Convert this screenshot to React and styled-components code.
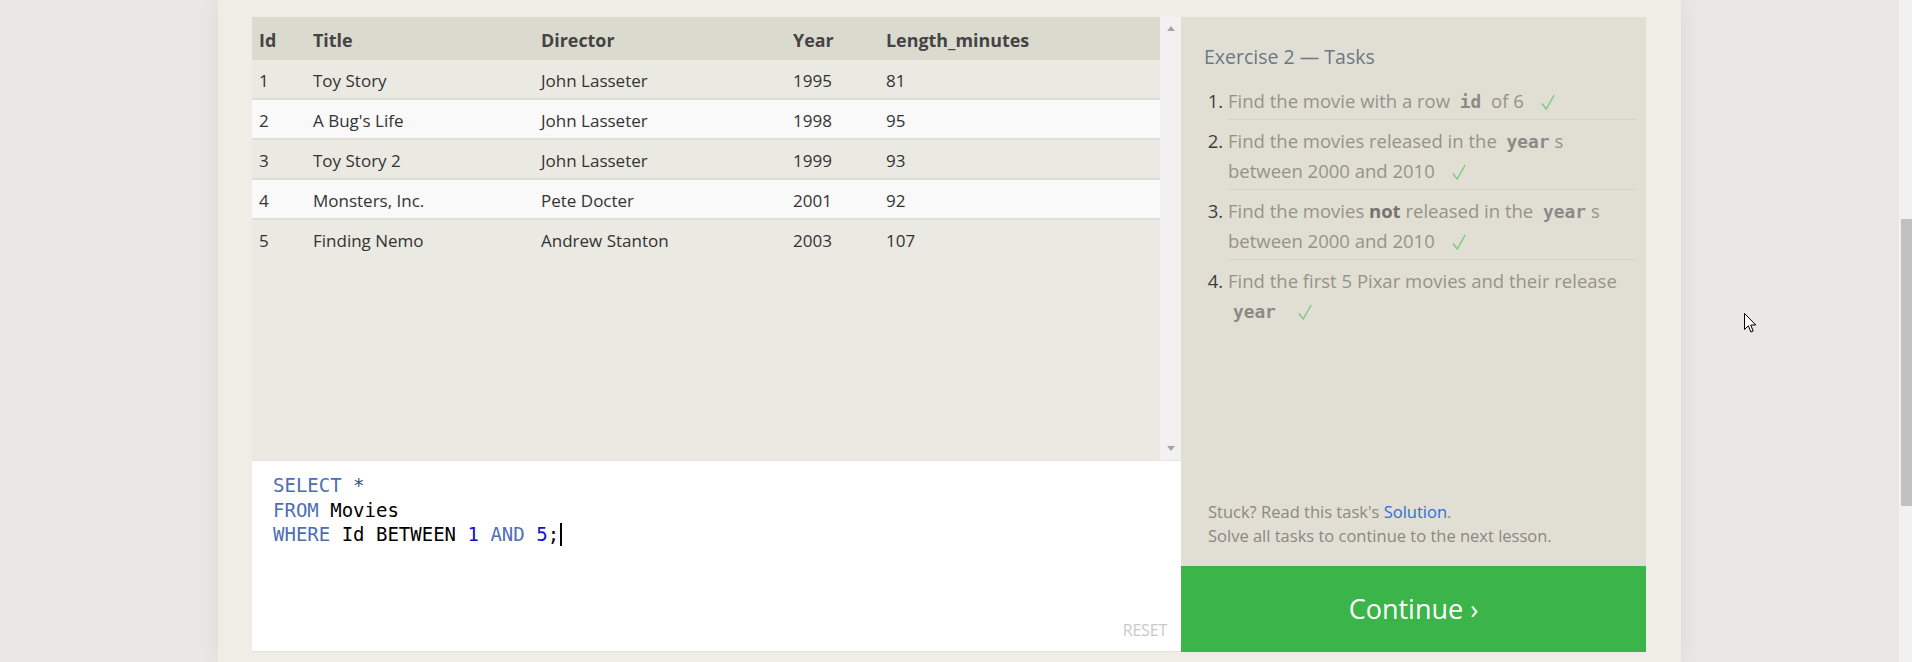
import React from 'react';
import styled, { createGlobalStyle } from 'styled-components';

const GlobalStyle = createGlobalStyle`
  html, body { margin: 0; padding: 0; background: #ebe7e4; overflow: hidden; }
  body { font-family: "Open Sans", "Noto Sans", sans-serif; }
  * { box-sizing: border-box; }
`;

const Page = styled.div`
  position: relative;
  display: flex;
  width: 1912px;
  height: 662px;
  overflow: hidden;
`;

const Sheet = styled.main`
  margin-left: 218px;
  width: 1463px;
  height: 100%;
  background: #f0ede6;
  box-shadow: 0 0 22px rgba(0, 0, 0, 0.07);
  padding: 17px 35px 0 34px;
`;

const Exercise = styled.section`
  display: flex;
  height: 635px;
`;

const LeftCol = styled.div`
  width: 929px;
  display: flex;
  flex-direction: column;
`;

const Results = styled.div`
  height: 443px;
  display: flex;
  background: #eae9e2;
`;

const TableArea = styled.div`
  flex: 1;
  font-size: 17px;
`;

const COLS = '54px 228px 252px 93px 1fr';

const HeaderRow = styled.div`
  display: grid;
  grid-template-columns: ${COLS};
  align-items: center;
  height: 43px;
  padding-top: 2px;
  background: #dbdacf;
  color: #444;
  font-size: 17.9px;
  font-weight: 700;
`;

const Row = styled.div`
  display: grid;
  grid-template-columns: ${COLS};
  align-items: center;
  height: 40px;
  padding-top: 2px;
  border-bottom: 2px solid #deddd8;
  background: ${(p) => (p.$even ? '#f9f9f9' : '#eae9e2')};
  color: #333;
  &:last-child { border-bottom-color: transparent; }
`;

const Cell = styled.div`
  padding-left: 7px;
  white-space: nowrap;
`;

const VScroll = styled.div`
  width: 21px;
  background: #f1f1f1;
  display: flex;
  flex-direction: column;
  justify-content: space-between;
  align-items: center;
  padding: 9px 0 9px;
`;

const Arrow = styled.div`
  width: 0;
  height: 0;
  border-left: 4.5px solid transparent;
  border-right: 4.5px solid transparent;
  ${(p) =>
    p.$down
      ? 'border-top: 5px solid #a3a3a3;'
      : 'border-bottom: 5px solid #a3a3a3;'}
`;

const Editor = styled.div`
  height: 192px;
  background: #fff;
  border-top: 1px solid #e6e4dd;
  border-bottom: 1px solid #e3e1da;
  display: flex;
  flex-direction: column;
  padding: 12px 14px 10px 21px;
`;

const Code = styled.pre`
  margin: 0;
  font-family: "DejaVu Sans Mono", "Liberation Mono", monospace;
  font-size: 19px;
  line-height: 24.5px;
  color: #000;
`;

const Kw = styled.span`
  color: #4e6eb4;
`;
const Num = styled.span`
  color: #1111cc;
`;
const Op = styled.span`
  color: #3d4f78;
`;

const Caret = styled.span`
  display: inline-block;
  width: 2px;
  height: 23px;
  background: #000;
  vertical-align: -5px;
  margin-left: 1px;
`;

const Reset = styled.button`
  margin-top: auto;
  align-self: flex-end;
  background: none;
  border: 0;
  padding: 0;
  font-family: "Open Sans", sans-serif;
  font-size: 16px;
  color: #c9c9c9;
  letter-spacing: -0.2px;
`;

const RightCol = styled.div`
  width: 465px;
  display: flex;
  flex-direction: column;
`;

const Tasks = styled.div`
  height: 549px;
  background: #e1dfd4;
  display: flex;
  flex-direction: column;
  padding: 27px 9px 18px 23px;
`;

const TasksTitle = styled.h2`
  margin: 0;
  font-size: 19.5px;
  font-weight: 400;
  line-height: 26px;
  color: #6b7888;
`;

const TaskList = styled.ol`
  margin: 10px 0 0;
  padding-left: 24px;
  font-size: 18.5px;
  line-height: 30px;
  color: #959389;
`;

const Task = styled.li`
  padding: 6px 0 3px;
  border-bottom: 1px solid #d6d4c9;
  &:last-child { border-bottom: 0; }
  &::marker { color: #3c3c3c; }
`;

const Mono = styled.code`
  font-family: "DejaVu Sans Mono", "Liberation Mono", monospace;
  font-weight: 700;
  font-size: 17.8px;
  line-height: 1;
  color: #8a8a86;
  padding: 0 5px;
`;

const Strong = styled.strong`
  color: #75736d;
  font-weight: 700;
`;

const Check = styled.svg`
  width: 14px;
  height: 16px;
  margin-left: 12px;
  vertical-align: -2px;
`;

const Footer = styled.div`
  margin-top: auto;
  padding-left: 4px;
  font-size: 16.5px;
  line-height: 24px;
  color: #8b8781;
`;

const Link = styled.a`
  color: #2f6fd6;
  text-decoration: none;
`;

const Continue = styled.button`
  height: 86px;
  border: 0;
  background: #3bb54a;
  color: #fff;
  font-family: "Open Sans", sans-serif;
  font-size: 27px;
  display: flex;
  align-items: center;
  justify-content: center;
  padding: 0 0 2px;
`;

const Spacer = styled.div`
  flex: 1;
`;

const PageScroll = styled.div`
  width: 13px;
  height: 100%;
  background: #f1f1f1;
  padding-left: 2px;
`;

const Thumb = styled.div`
  margin-top: 219px;
  height: 287px;
  background: #c1c1c1;
`;

const Cursor = styled.svg`
  position: absolute;
  left: 1744px;
  top: 313px;
  width: 13px;
  height: 21px;
`;

const movies = [
  [1, 'Toy Story', 'John Lasseter', 1995, 81],
  [2, "A Bug's Life", 'John Lasseter', 1998, 95],
  [3, 'Toy Story 2', 'John Lasseter', 1999, 93],
  [4, 'Monsters, Inc.', 'Pete Docter', 2001, 92],
  [5, 'Finding Nemo', 'Andrew Stanton', 2003, 107],
];

const headers = ['Id', 'Title', 'Director', 'Year', 'Length_minutes'];

const Tick = () => (
  <Check viewBox="0 0 14 16">
    <path d="M1 9.5 L5.2 15 L13.2 1" fill="none" stroke="#79c77b" strokeWidth="1.3" />
  </Check>
);

export default function App() {
  return (
    <>
      <GlobalStyle />
      <Page>
        <Sheet>
          <Exercise>
            <LeftCol>
              <Results>
                <TableArea>
                  <HeaderRow>
                    {headers.map((h) => (
                      <Cell key={h}>{h}</Cell>
                    ))}
                  </HeaderRow>
                  {movies.map((m, i) => (
                    <Row key={m[0]} $even={i % 2 === 1}>
                      {m.map((v, j) => (
                        <Cell key={j}>{v}</Cell>
                      ))}
                    </Row>
                  ))}
                </TableArea>
                <VScroll>
                  <Arrow />
                  <Arrow $down />
                </VScroll>
              </Results>
              <Editor>
                <Code>
                  <Kw>SELECT</Kw> <Op>*</Op>
                  {'\n'}
                  <Kw>FROM</Kw> Movies
                  {'\n'}
                  <Kw>WHERE</Kw> Id BETWEEN <Num>1</Num> <Kw>AND</Kw> <Num>5</Num>;<Caret />
                </Code>
                <Reset>RESET</Reset>
              </Editor>
            </LeftCol>
            <RightCol>
              <Tasks>
                <TasksTitle>Exercise 2 — Tasks</TasksTitle>
                <TaskList>
                  <Task>
                    Find the movie with a row <Mono>id</Mono> of 6 <Tick />
                  </Task>
                  <Task>
                    Find the movies released in the <Mono>year</Mono>s between 2000 and 2010 <Tick />
                  </Task>
                  <Task>
                    Find the movies <Strong>not</Strong> released in the <Mono>year</Mono>s between 2000 and 2010 <Tick />
                  </Task>
                  <Task>
                    Find the first 5 Pixar movies and their release <Mono>year</Mono> <Tick />
                  </Task>
                </TaskList>
                <Footer>
                  Stuck? Read this task's <Link href="#">Solution</Link>.
                  <br />
                  Solve all tasks to continue to the next lesson.
                </Footer>
              </Tasks>
              <Continue>Continue ›</Continue>
            </RightCol>
          </Exercise>
        </Sheet>
        <Spacer />
        <PageScroll>
          <Thumb />
        </PageScroll>
        <Cursor viewBox="0 0 13 21">
          <path
            d="M0.5 0.5 L0.5 16.5 L4.3 12.8 L6.9 19 L9.2 18 L6.7 12 L11.8 12 Z"
            fill="#fff"
            stroke="#000"
            strokeWidth="1"
            strokeLinejoin="miter"
          />
        </Cursor>
      </Page>
    </>
  );
}
